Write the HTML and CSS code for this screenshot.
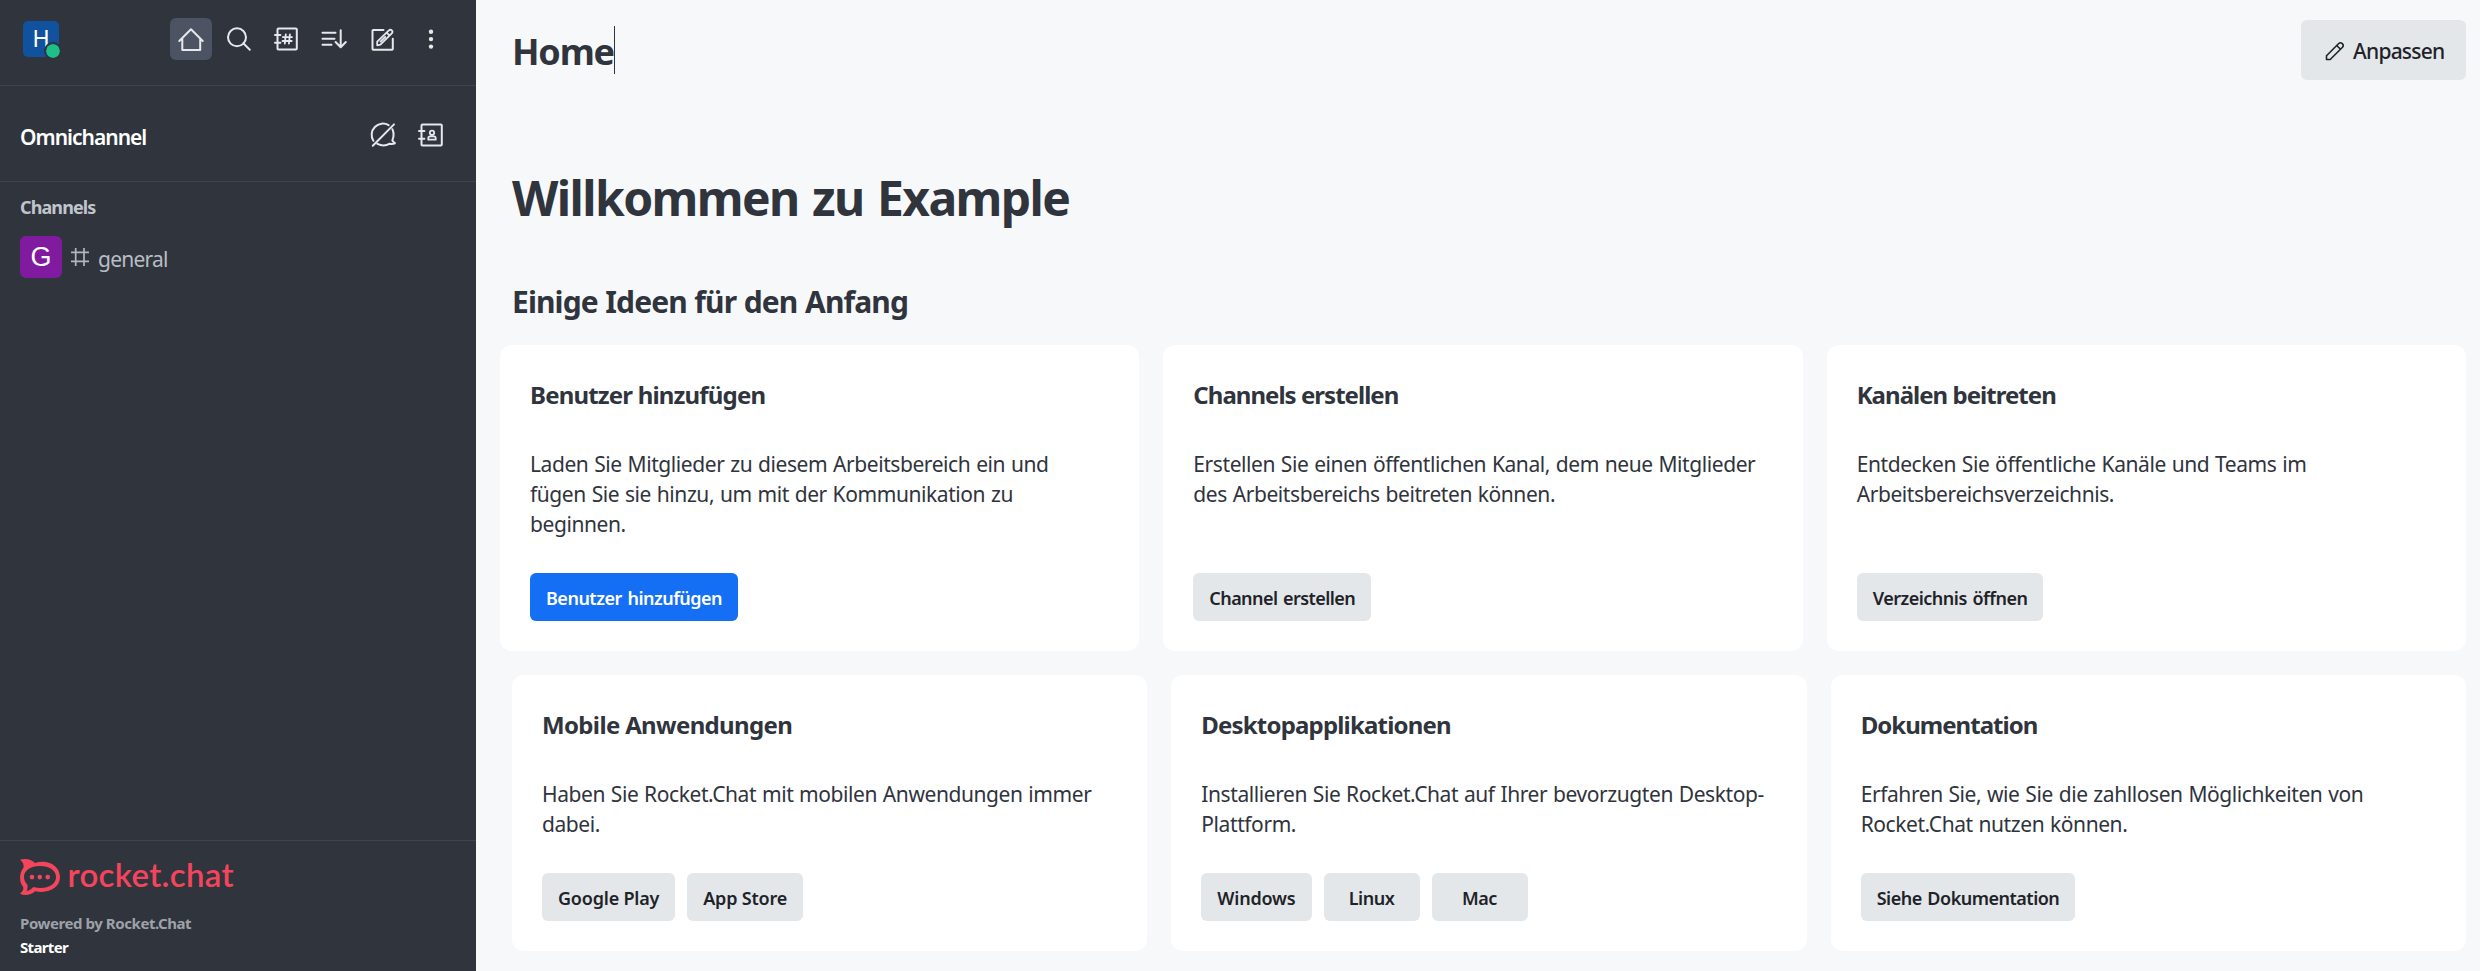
FILE: index.html
```
<!DOCTYPE html>
<html lang="de">
<head>
<meta charset="utf-8">
<title>Home</title>
<link rel="stylesheet" href="styles.css">
</head>
<body>
<div class="app">
  <aside class="sidebar">
    <header class="topbar">
      <div class="avatar avatar-user">H<span class="status"></span></div>
      <nav class="actions">
        <button class="icon-btn active"><svg viewBox="0 0 30 30"><path d="M3.3 17 15 5.3 26.7 17M6.3 14.5V26h17.9V14.5"/></svg></button>
        <button class="icon-btn"><svg viewBox="0 0 30 30"><circle cx="13" cy="13.3" r="9"/><path d="m19.3 19.3 6.5 6.4"/></svg></button>
        <button class="icon-btn"><svg viewBox="0 0 30 30"><rect x="5.5" y="4.5" width="19.3" height="21" rx="1"/><path d="M3 11h5.4M3 18.7h5.4"/><path class="fine" d="M13.8 10.3l-1 9.4M17.9 10.3l-1 9.4M10.8 13.1h9.2M10.5 17h9.2"/></svg></button>
        <button class="icon-btn"><svg viewBox="0 0 30 30"><path d="M2.5 8.7H15.5M2.5 14.7H14.5M2.5 20.7H11.5M20.7 6.3V23M15.6 18l5.1 5.3 5.1-5.3"/></svg></button>
        <button class="icon-btn"><svg viewBox="0 0 30 30"><path d="M15.5 5.9H5.2q-.7 0-.7.7V25q0 .8.7.8H24q.8 0 .8-.8V14.8"/><path class="fine" d="M9.2 21.3v-3.6L20.9 6.4q1.5-1.3 2.9 0 1.4 1.5 0 2.9L12.4 20.7ZM18.6 8.6l3 3M12.5 17.6l4.8-4.8"/></svg></button>
        <button class="icon-btn"><svg viewBox="0 0 30 30"><g class="solid"><circle cx="15" cy="7.7" r="2.2"/><circle cx="15" cy="15.1" r="2.2"/><circle cx="15" cy="22.6" r="2.2"/></g></svg></button>
      </nav>
    </header>
    <section class="omni">
      <h3 class="omni-title">Omnichannel</h3>
      <nav class="actions">
        <button class="icon-btn"><svg viewBox="0 0 30 30"><path d="M20.6 5.2A11.2 11.2 0 0 0 5.4 20.8M24.4 9.2Q26.6 14.6 24.7 19.2q-.8 1.8.8 2.6 1.7.7 1.4 1.5-2.2 1-5.1.4-6 3.5-12.4.2M4.8 25.7 26 4.4"/></svg></button>
        <button class="icon-btn"><svg viewBox="0 0 30 30"><rect x="5.5" y="4.5" width="20.3" height="21" rx="1"/><path d="M3 11h5.4M3 18.7h5.4"/><path class="fine" d="M12.3 19.7v-1.6q0-1.8 1.8-1.8h3.8q1.8 0 1.8 1.8v1.6Z"/><circle class="fine" cx="16" cy="12.8" r="2.2"/></svg></button>
      </nav>
    </section>
    <section class="rooms">
      <h4 class="rooms-title">Channels</h4>
      <a class="room">
        <span class="avatar avatar-room">G</span>
        <svg class="hash" viewBox="0 0 18 18"><path d="M4.7 0v18M13 0v18M0 4.4h18M0 13.4h18"/></svg>
        <span class="room-name">general</span>
      </a>
    </section>
    <footer class="brand">
      <svg class="logo" viewBox="0 0 214 36">
        <path class="mark" fill-rule="evenodd" d="M0 .8C5-.8 11-.2 15 3.9 29-.2 40 7.5 40 18.1 40 29 28 35.3 15 32.2 11 36.3 4.5 36.9 0 34.7 4 31.5 3.8 28.5 2.6 27-.9 23-.9 13.5 3.5 8.7 4.2 5.5 2.8 3 0 .8ZM20 7.1C10.5 7.1 4 11.7 4 18 4 21 5.5 23.5 7.3 25.5 8 28 7.3 30.5 6.6 32 9.7 31.5 11.5 29.5 13.5 28 25 31.1 36 26.5 36 18 36 11.7 29.5 7.1 20 7.1Z"/>
        <g class="mark"><circle cx="12" cy="18.1" r="2.3"/><circle cx="19.8" cy="18.1" r="2.3"/><circle cx="27.7" cy="18.1" r="2.3"/></g>
        <text class="wordmark" x="47.5" y="27.5" textLength="166">rocket.chat</text>
      </svg>
      <p class="powered">Powered by Rocket.Chat</p>
      <p class="plan">Starter</p>
    </footer>
  </aside>

  <main class="main">
    <header class="page-head">
      <h1 class="page-title"><span class="page-name">Home</span><span class="caret"></span></h1>
      <button class="customize"><svg viewBox="0 0 20 20"><path d="M1.5 18.5V14.8L13.7 2.5Q15.5.9 17.3 2.6 19.1 4.5 17.5 6.3L5.2 18.5ZM11.7 4.5l3.8 3.8"/></svg>Anpassen</button>
    </header>
    <div class="content">
      <h2 class="welcome">Willkommen zu Example</h2>
      <h3 class="ideas">Einige Ideen für den Anfang</h3>
      <div class="grid grid-start">
        <article class="card">
          <h4 class="card-title">Benutzer hinzufügen</h4>
          <p class="card-text">Laden Sie Mitglieder zu diesem Arbeitsbereich ein und<br>fügen Sie sie hinzu, um mit der Kommunikation zu<br>beginnen.</p>
          <div class="buttons"><button class="btn primary">Benutzer hinzufügen</button></div>
        </article>
        <article class="card">
          <h4 class="card-title narrow">Channels erstellen</h4>
          <p class="card-text">Erstellen Sie einen öffentlichen Kanal, dem neue Mitglieder<br>des Arbeitsbereichs beitreten können.</p>
          <div class="buttons"><button class="btn tight">Channel erstellen</button></div>
        </article>
        <article class="card">
          <h4 class="card-title narrow">Kanälen beitreten</h4>
          <p class="card-text">Entdecken Sie öffentliche Kanäle und Teams im<br>Arbeitsbereichsverzeichnis.</p>
          <div class="buttons"><button class="btn">Verzeichnis öffnen</button></div>
        </article>
      </div>
      <div class="grid grid-more">
        <article class="card">
          <h4 class="card-title wide">Mobile Anwendungen</h4>
          <p class="card-text">Haben Sie Rocket.Chat mit mobilen Anwendungen immer<br>dabei.</p>
          <div class="buttons"><button class="btn roomy">Google Play</button><button class="btn roomy">App Store</button></div>
        </article>
        <article class="card">
          <h4 class="card-title">Desktopapplikationen</h4>
          <p class="card-text">Installieren Sie Rocket.Chat auf Ihrer bevorzugten Desktop-<br>Plattform.</p>
          <div class="buttons"><button class="btn roomy">Windows</button><button class="btn">Linux</button><button class="btn">Mac</button></div>
        </article>
        <article class="card">
          <h4 class="card-title narrow">Dokumentation</h4>
          <p class="card-text">Erfahren Sie, wie Sie die zahllosen Möglichkeiten von<br>Rocket.Chat nutzen können.</p>
          <div class="buttons"><button class="btn">Siehe Dokumentation</button></div>
        </article>
      </div>
    </div>
  </main>
</div>
</body>
</html>
```
FILE: styles.css
```
* { box-sizing: border-box; margin: 0; padding: 0; }
body { font-family: "Noto Sans", "Open Sans", sans-serif; color: #2f343d; background: #f7f8fa; }
button { border: 0; background: none; font: inherit; color: inherit; white-space: nowrap; }

.app { display: flex; width: 2480px; height: 971px; overflow: hidden; }

/* Sidebar */
.sidebar { display: flex; flex-direction: column; flex: none; width: 476px; background: #2f343d; color: #fff; }
.topbar { display: flex; justify-content: space-between; align-items: flex-start; height: 86px; padding: 18px 24px 0 23px; border-bottom: 1px solid #3f4550; }
.avatar { display: flex; align-items: center; justify-content: center; flex: none; color: #fff; font-family: "Liberation Sans", Arial, sans-serif; }
.avatar-user { position: relative; width: 36px; height: 36px; margin-top: 3px; border-radius: 5px; background: #10529e; font-size: 23px; }
.status { position: absolute; left: 21px; top: 21px; width: 18px; height: 18px; border: 2px solid #2f343d; border-radius: 50%; background: #1fbf8a; background-clip: padding-box; }
.actions { display: flex; gap: 6px; }
.icon-btn { display: flex; align-items: center; justify-content: center; width: 42px; height: 42px; border-radius: 6px; }
.icon-btn.active { background: #4c5362; }
.icon-btn svg { width: 30px; height: 30px; fill: none; stroke: #e6e8eb; stroke-width: 2; stroke-linecap: round; stroke-linejoin: round; }
.icon-btn .fine { stroke-width: 1.8; }
.icon-btn .solid { fill: #e6e8eb; stroke: none; }

.omni { display: flex; justify-content: space-between; height: 96px; padding: 28px 24px 0 20px; border-bottom: 1px solid #3f4550; }
.omni-title { padding-top: 8px; font-size: 21px; line-height: 30px; font-weight: 600; letter-spacing: -1px; }

.rooms { flex: 1; padding: 13px 20px; }
.rooms-title { font-size: 18px; line-height: 24px; font-weight: 700; letter-spacing: -0.9px; color: #c0c5cc; }
.room { display: flex; align-items: center; margin-top: 17px; }
.avatar-room { width: 42px; height: 42px; border-radius: 6px; background: #801b9f; font-size: 27px; }
.hash { width: 18px; height: 18px; margin-left: 9px; overflow: visible; fill: none; stroke: #b2b7bf; stroke-width: 1.7; }
.room-name { margin: 3px 0 0 9px; font-size: 21px; line-height: 30px; letter-spacing: -0.75px; color: #b8bdc5; }

.brand { height: 131px; padding: 18px 20px 0; border-top: 1px solid #3f4550; }
.logo { display: block; width: 214px; height: 36px; overflow: visible; }
.mark { fill: #f5455c; }
.wordmark { fill: #f5455c; font: 600 33px Lato, sans-serif; }
.powered, .plan { font-size: 15px; line-height: 24px; font-weight: 700; letter-spacing: -0.43px; }
.powered { margin-top: 16px; color: #9ea2a8; }
.plan { letter-spacing: -0.65px; }

/* Page */
.main { flex: 1; min-width: 0; }
.page-head { display: flex; justify-content: space-between; align-items: center; height: 100px; padding: 0 14px 0 36px; }
.page-title { display: flex; align-items: center; font-size: 36px; line-height: 48px; letter-spacing: -1.2px; }
.page-name { padding-top: 4px; }
.caret { width: 1px; height: 48px; background: #2f343d; }
.customize { display: flex; align-items: center; gap: 8px; width: 165px; height: 60px; padding: 2px 0 0 24px; border-radius: 6px; background: #e4e7ea; color: #1f2329; font-size: 21px; font-weight: 500; letter-spacing: -0.77px; }
.customize svg { width: 20px; height: 20px; fill: none; stroke: #1f2329; stroke-width: 1.6; stroke-linejoin: round; }

.content { padding: 66px 14px 0 24px; }
.welcome { padding-left: 12px; font-size: 48px; line-height: 64px; letter-spacing: -1.6px; word-spacing: 2.5px; }
.ideas { margin: 51px 0 0; padding-left: 12px; font-size: 30px; line-height: 42px; letter-spacing: -0.9px; word-spacing: 0.7px; }
.grid { display: grid; grid-template-columns: repeat(3, 1fr); gap: 24px; }
.grid-start { height: 306px; margin-top: 22px; }
.grid-more { height: 276px; margin-top: 24px; padding-left: 12px; }
.card { display: flex; flex-direction: column; padding: 32px 30px 30px; border-radius: 12px; background: #fff; }
.card-title { font-size: 24px; line-height: 36px; letter-spacing: -0.82px; }
.card-title.narrow { letter-spacing: -0.97px; }
.card-title.wide { letter-spacing: -0.65px; }
.card-text { margin-top: 36px; font-size: 21px; line-height: 30px; font-weight: 450; letter-spacing: -0.42px; word-spacing: 0.75px; white-space: nowrap; }
.buttons { display: flex; gap: 12px; margin-top: auto; }
.btn { min-width: 96px; height: 48px; padding: 1px 16px 0; border-radius: 6px; background: #e4e7ea; color: #1f2329; font-size: 18px; font-weight: 650; letter-spacing: -0.5px; word-spacing: 1.5px; }
.btn.tight { letter-spacing: -0.57px; }
.btn.roomy { letter-spacing: -0.2px; word-spacing: 0; }
.btn.primary { background: #156ff5; color: #fff; }
```
